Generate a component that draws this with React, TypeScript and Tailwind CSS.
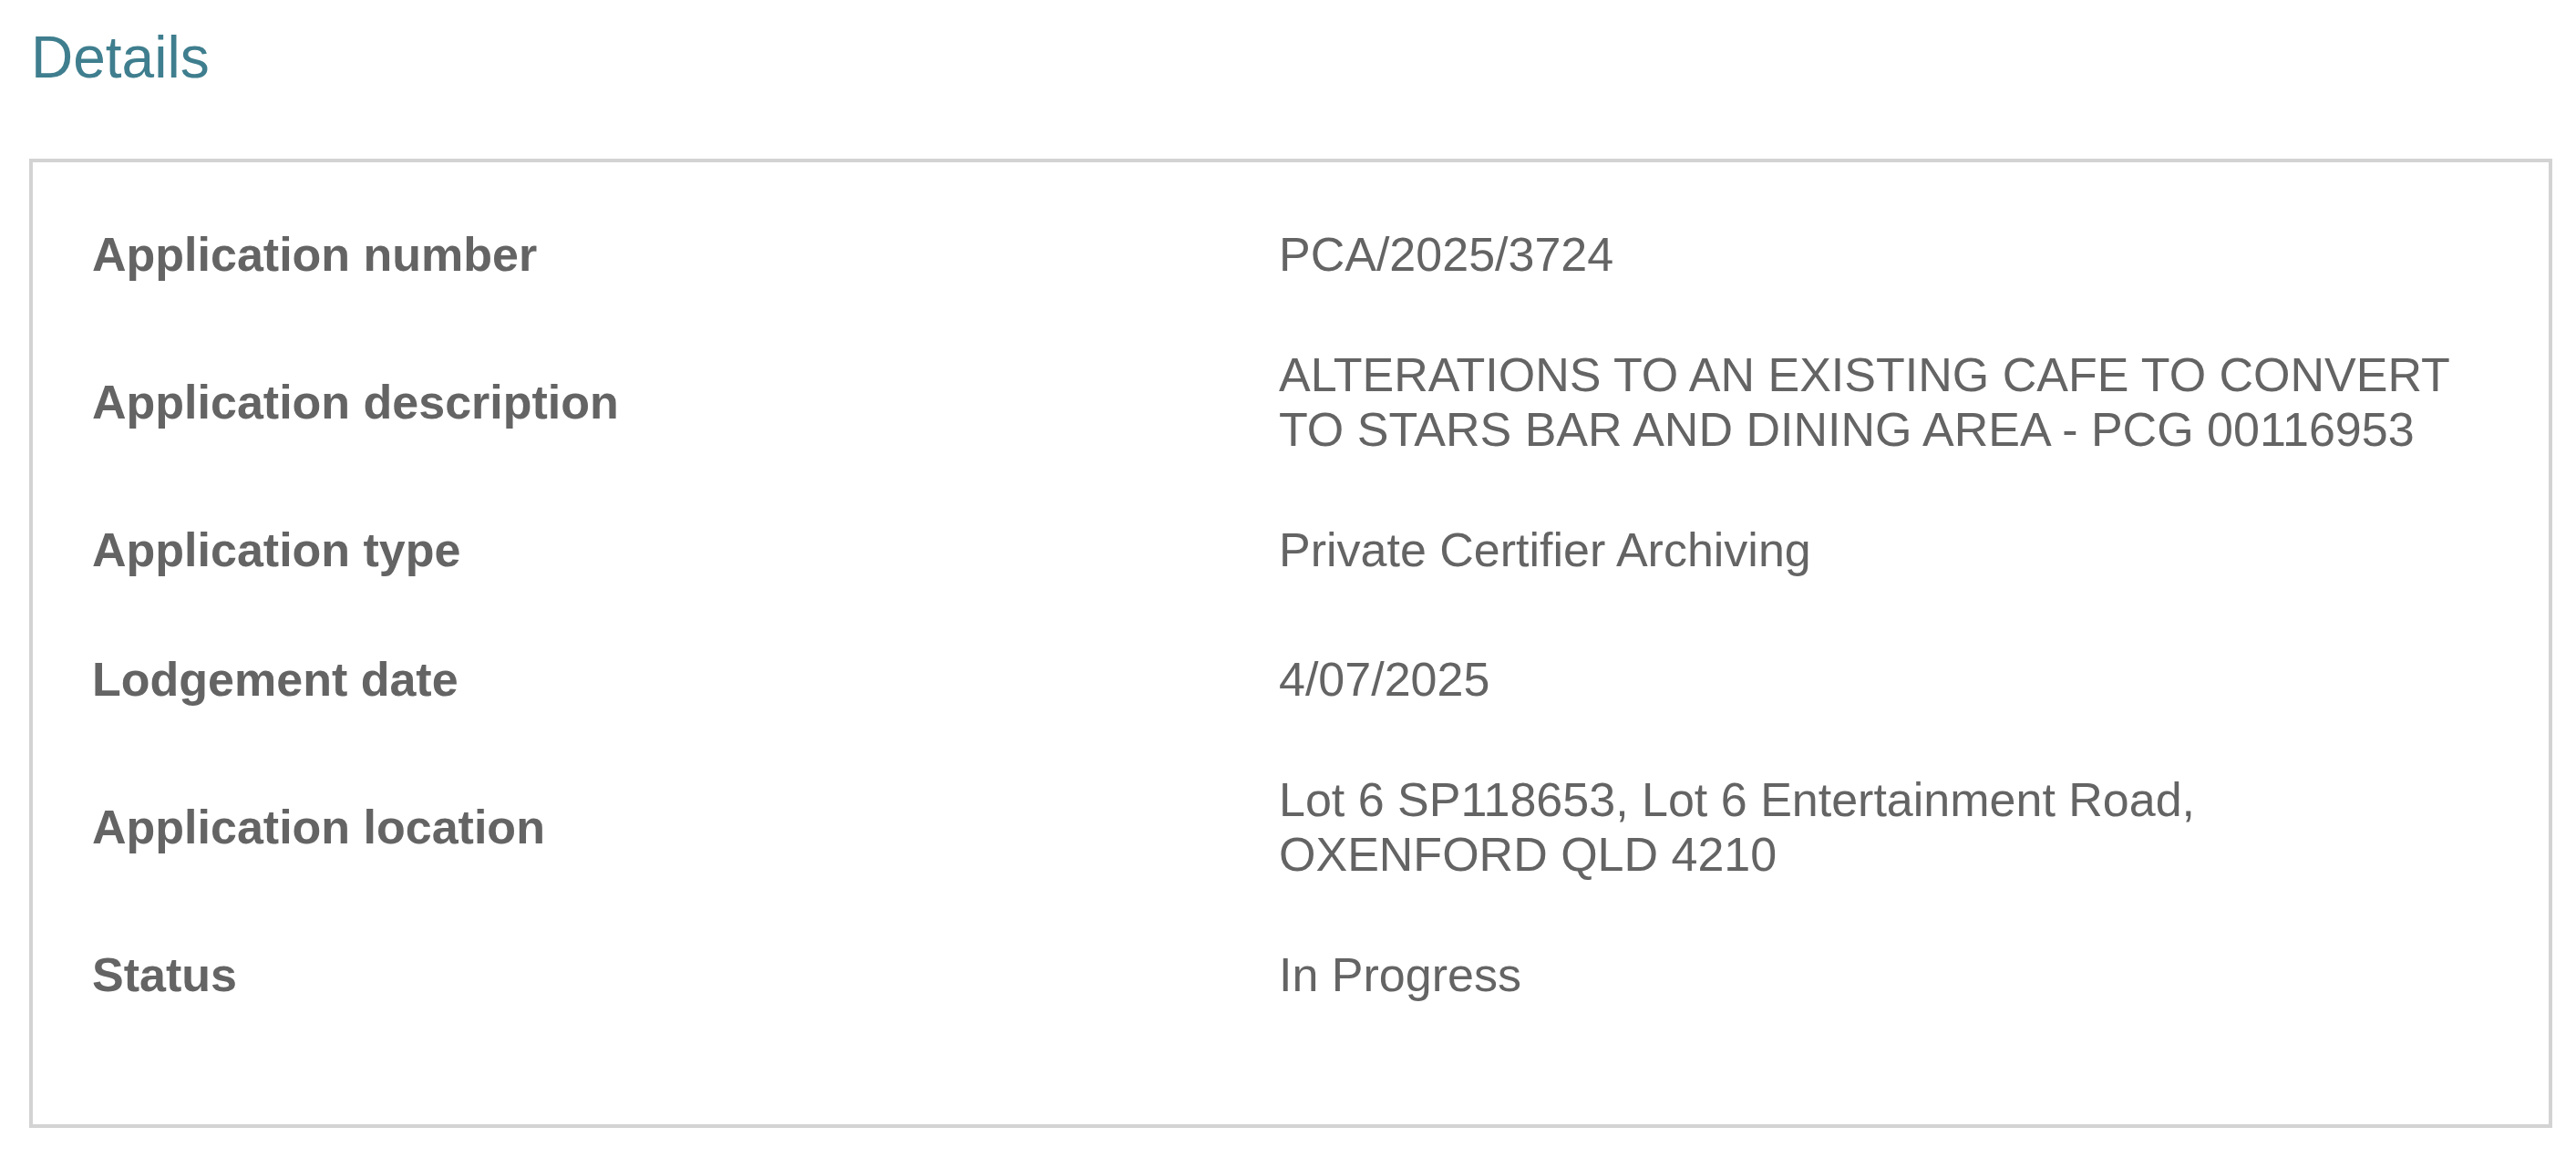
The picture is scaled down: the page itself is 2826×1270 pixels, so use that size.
const ROWS: { label: string; value: string; extra?: boolean }[] = [
  { label: 'Application number', value: 'PCA/2025/3724' },
  {
    label: 'Application description',
    value: 'ALTERATIONS TO AN EXISTING CAFE TO CONVERT TO STARS BAR AND DINING AREA - PCG 00116953',
  },
  { label: 'Application type', value: 'Private Certifier Archiving', extra: true },
  { label: 'Lodgement date', value: '4/07/2025' },
  { label: 'Application location', value: 'Lot 6 SP118653, Lot 6 Entertainment Road, OXENFORD QLD 4210' },
  { label: 'Status', value: 'In Progress' },
]

export default function App() {
  return (
    <div className="min-h-screen bg-white pl-[32px] pr-[26px] font-['Liberation_Sans',Arial,sans-serif]">
      <h1 className="pt-[27px] pl-[2px] text-[64px] leading-[1.15] font-normal text-[#3f7e8e]">Details</h1>

      <div className="mt-[73px] border-[4px] border-[#d3d3d3] pl-[65px] pt-[71px] pb-[134px]">
        <dl className="flex flex-col gap-[72px]">
          {ROWS.map((r) => (
            <div key={r.label} className={`flex items-center ${r.extra ? 'mb-[10px]' : ''}`}>
              <dt className="w-[1302px] shrink-0 text-[52px] leading-[60px] font-bold text-[#646464]">{r.label}</dt>
              <dd className="w-[1294px] text-[52px] leading-[60px] text-[#646464]">{r.value}</dd>
            </div>
          ))}
        </dl>
      </div>
    </div>
  )
}
